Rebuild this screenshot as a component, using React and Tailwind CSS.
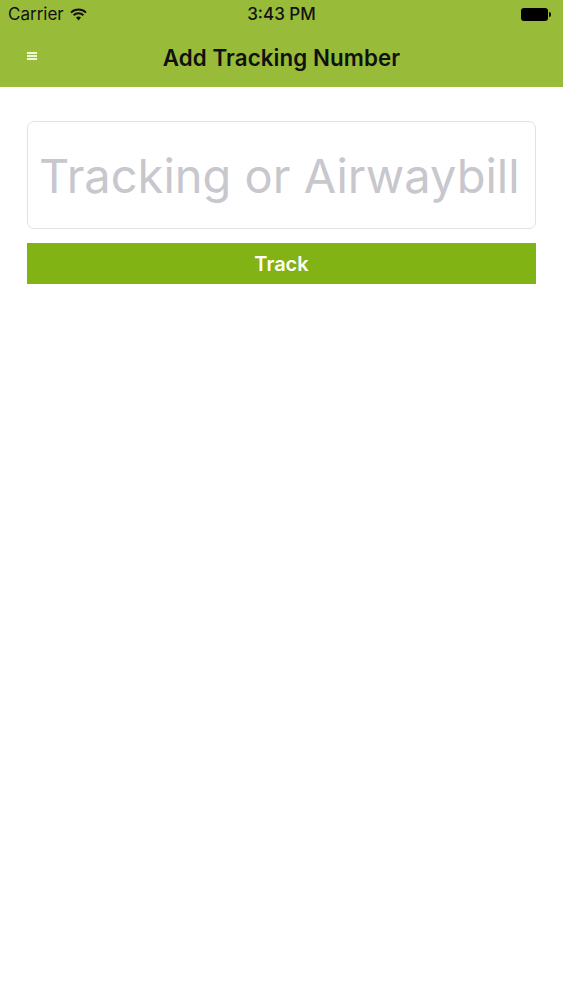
import React from "react";

function Wifi() {
  return (
    <svg width="17" height="13" viewBox="0 0 17 13" className="block">
      <path d="M8.5 12.5 L11 9.6 A3.8 3.8 0 0 0 6 9.6 Z" fill="#111" />
      <path d="M3.6 7.3 A7 7 0 0 1 13.4 7.3" stroke="#111" strokeWidth="1.9" fill="none" />
      <path d="M1 4.6 A10.8 10.8 0 0 1 16 4.6" stroke="#111" strokeWidth="1.9" fill="none" />
    </svg>
  );
}

function Battery() {
  return (
    <div className="flex items-center">
      <div className="w-[27px] h-[13px] rounded-[3px] bg-black" />
      <div className="w-[2px] h-[5px] bg-black rounded-r-sm ml-[1px]" />
    </div>
  );
}

export default function App() {
  return (
    <div className="w-[563px] h-[1000px] bg-white" style={{ fontFamily: "Inter, 'Liberation Sans', sans-serif" }}>
      <div className="bg-[#98bc39] h-[87px] flex flex-col">
        <div className="h-[28px] relative flex items-center px-[8px]">
          <div className="flex items-center gap-[6px]">
            <span className="text-[17px] text-[#111] leading-none">Carrier</span>
            <Wifi />
          </div>
          <div className="absolute left-0 right-0 top-0 h-[28px] flex items-center justify-center pointer-events-none">
            <span className="text-[17px] font-medium text-[#111] leading-none">3:43 PM</span>
          </div>
          <div className="ml-auto mr-[4px]">
            <Battery />
          </div>
        </div>
        <div className="flex-1 relative flex items-center justify-center">
          <div className="absolute left-[27px] top-[24px] flex flex-col gap-[1px]">
            <div className="w-[10px] h-[2px] bg-[#eef7d6]" />
            <div className="w-[10px] h-[2px] bg-[#eef7d6]" />
            <div className="w-[10px] h-[2px] bg-[#eef7d6]" />
          </div>
          <h1 className="text-[22.3px] font-semibold text-[#111] tracking-[0.1px] mt-[1px]">Add Tracking Number</h1>
        </div>
      </div>
      <div className="px-[27px] pt-[34px] flex flex-col gap-[14px]">
        <div className="h-[108px] border border-[#e2e2e2] rounded-[7px] flex items-center px-[11px]">
          <span className="text-[47px] text-[#c7c7cd] leading-none whitespace-nowrap">Tracking or Airwaybill</span>
        </div>
        <button className="h-[41px] bg-[#80b313] text-white text-[20px] font-semibold flex items-center justify-center">
          Track
        </button>
      </div>
    </div>
  );
}
